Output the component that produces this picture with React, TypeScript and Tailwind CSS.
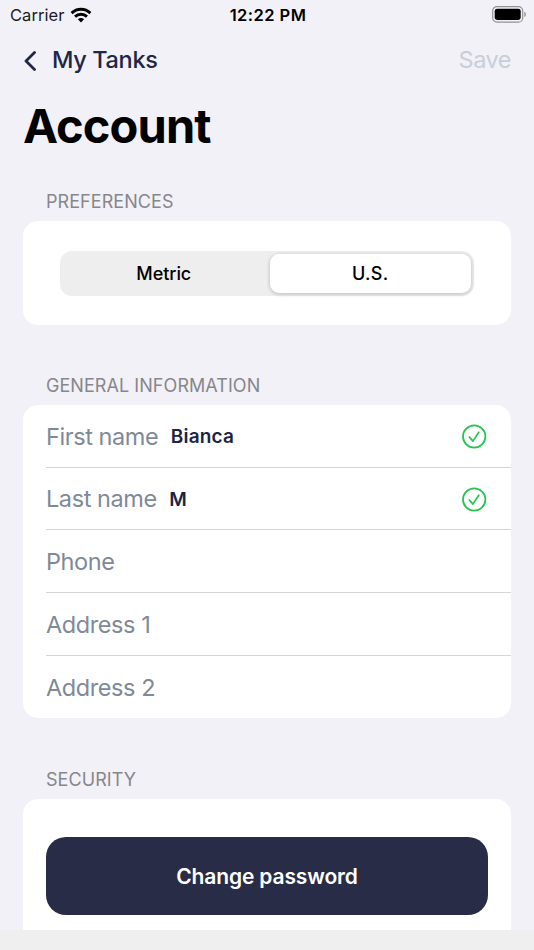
import { useState } from "react";

const fields = [
  { label: "First name", value: "Bianca" },
  { label: "Last name", value: "M" },
  { label: "Phone", value: "" },
  { label: "Address 1", value: "" },
  { label: "Address 2", value: "" },
];

function WifiIcon() {
  return (
    <svg width="22" height="16" viewBox="0 0 22 16" fill="none" stroke="#000" strokeWidth="2.9">
      <path d="M1.6 6.1C7 .9 15 .9 20.4 6.1" />
      <path d="M5 9.6C8.4 6.4 13.6 6.4 17 9.6" />
      <path d="M7.9 12.3C9.7 10.7 12.3 10.7 14.1 12.3L11 15.5Z" fill="#000" stroke="none" />
    </svg>
  );
}

function BatteryIcon() {
  return (
    <svg width="35" height="17" viewBox="0 0 35 17">
      <rect x="0.7" y="0.7" width="30" height="15.4" rx="4.2" fill="none" stroke="#929196" strokeWidth="1.2" />
      <rect x="2.7" y="2.8" width="26" height="11.2" rx="2.4" fill="#000" />
      <path d="M32.3 5.8C34.4 6.6 34.4 10.2 32.3 11Z" fill="#929196" />
    </svg>
  );
}

function CheckIcon() {
  return (
    <svg width="25" height="25" viewBox="0 0 25 25" fill="none" stroke="#26c552" strokeLinecap="round" strokeLinejoin="round">
      <circle cx="12.2" cy="12.5" r="11.2" strokeWidth="1.8" />
      <path d="M7.4 13L10.9 17.1L16.8 8.2" strokeWidth="1.7" />
    </svg>
  );
}

function SectionTitle({ children }: { children: string }) {
  return <h2 className="h-8 pl-[23px] pt-px text-[18px] leading-6 tracking-[0.06px] text-[#87868b]">{children}</h2>;
}

export default function App() {
  const [units, setUnits] = useState("U.S.");

  return (
    <div className="flex h-[950px] w-[534px] flex-col overflow-hidden bg-[#f2f1f7] font-['Inter',sans-serif]">
      {/* Status bar */}
      <div className="grid h-[30px] shrink-0 grid-cols-3 items-center pl-[10px] pr-[7px]">
        <div className="flex items-center gap-[6px] text-[16.5px] text-[#1b1b1d]">
          <span className="tracking-[0.05px]">Carrier</span>
          <WifiIcon />
        </div>
        <span className="-ml-px text-center text-[16.5px] font-semibold tracking-[0.45px]">12:22 PM</span>
        <div className="flex justify-end pb-px">
          <BatteryIcon />
        </div>
      </div>

      {/* Navigation */}
      <div className="flex h-[60px] shrink-0 items-center justify-between px-[23px]">
        <button className="flex items-center gap-[14px] text-[#202746]">
          <svg width="15" height="22" viewBox="0 0 15 22" fill="none" stroke="currentColor" strokeWidth="2.8" strokeLinecap="round" strokeLinejoin="round">
            <path d="M11.5 3.5L3 12L11.5 20.5" />
          </svg>
          <span className="text-[23.5px] font-medium leading-7 tracking-[-0.35px]">My Tanks</span>
        </button>
        <button className="text-[23.5px] leading-7 tracking-[-0.5px] text-[#c6cfd7]">Save</button>
      </div>

      <h1 className="h-[99px] shrink-0 pl-[23px] pt-[6px] text-[47px] font-bold leading-[60px] tracking-[-0.9px] text-black">
        Account
      </h1>

      {/* Scrolling form */}
      <main className="h-[741px] shrink-0 overflow-hidden px-[23px]">
        <SectionTitle>PREFERENCES</SectionTitle>
        <section className="rounded-[15px] bg-white px-[37px] pb-[29px] pt-[30px]">
          <div className="flex h-[45px] gap-[5px] rounded-[12px] bg-[#eeeeee] p-[3px]">
            {["Metric", "U.S."].map((unit) => (
              <button
                key={unit}
                onClick={() => setUnits(unit)}
                className={
                  units === unit
                    ? "h-[39px] flex-1 rounded-[9px] bg-white text-[18px] font-medium tracking-[0.3px] shadow-[0_1px_4px_rgba(0,0,0,0.22)]"
                    : "h-[39px] flex-1 text-[18px] font-medium tracking-[-0.05px]"
                }
              >
                {unit}
              </button>
            ))}
          </div>
        </section>

        <div className="h-12" />
        <SectionTitle>GENERAL INFORMATION</SectionTitle>
        <section className="rounded-[15px] bg-white pl-[23px]">
          {fields.map((field) => (
            <div
              key={field.label}
              className="flex h-[62.7px] items-center border-b border-[#d5d5d8] pr-[24px] pt-px last:border-b-0"
            >
              <span className="text-[23.5px] tracking-[-0.42px] text-[#808998]">{field.label}</span>
              <span className="ml-[12.5px] flex-1 pt-[2px] text-[19px] font-semibold tracking-[0.2px] text-[#1c2343]">{field.value}</span>
              {field.value && <CheckIcon />}
            </div>
          ))}
        </section>

        <div className="h-[48.5px]" />
        <SectionTitle>SECURITY</SectionTitle>
        <section className="rounded-t-[15px] bg-white px-[23px] pb-10 pt-[38px]">
          <button className="h-[78px] w-full rounded-[20px] bg-[#282c47] pt-[2px] text-[21px] font-semibold tracking-[-0.13px] text-white">
            Change password
          </button>
        </section>
      </main>

      <div className="h-5 shrink-0 bg-[#efefef]" />
    </div>
  );
}
